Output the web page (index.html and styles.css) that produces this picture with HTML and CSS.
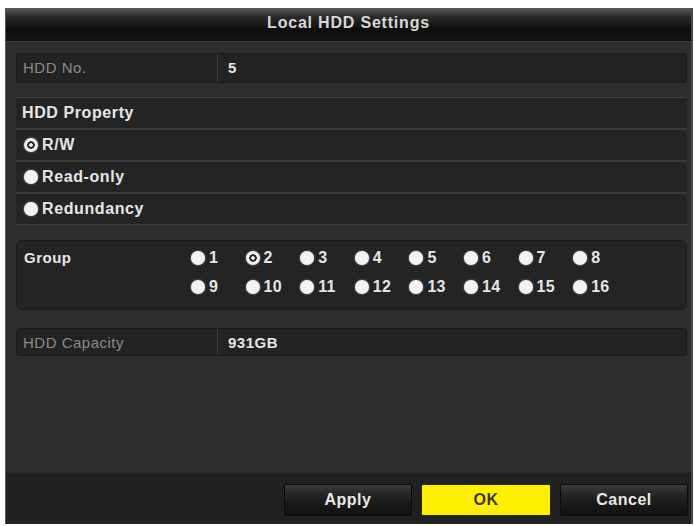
FILE: index.html
```html
<!DOCTYPE html>
<html lang="en">
<head>
    <meta charset="UTF-8">
    <meta name="viewport" content="width=device-width, initial-scale=1.0">
    <title>Local HDD Settings</title>
    <link rel="stylesheet" href="styles.css">
</head>
<body>
    <div class="window">
        <div class="title">Local HDD Settings</div>

        <div class="content">
            <div class="field">
                <div class="label dim">HDD No.</div>
                <div class="value">5</div>
            </div>

            <div class="list">
                <div class="item">HDD Property</div>
                <div class="item"><span class="radio checked"></span>R/W</div>
                <div class="item"><span class="radio"></span>Read-only</div>
                <div class="item"><span class="radio"></span>Redundancy</div>
            </div>

            <div class="group">
                <div class="group-label">Group</div>
                <div class="group-grid">
                    <div class="opt"><span class="radio"></span>1</div>
                    <div class="opt"><span class="radio checked"></span>2</div>
                    <div class="opt"><span class="radio"></span>3</div>
                    <div class="opt"><span class="radio"></span>4</div>
                    <div class="opt"><span class="radio"></span>5</div>
                    <div class="opt"><span class="radio"></span>6</div>
                    <div class="opt"><span class="radio"></span>7</div>
                    <div class="opt"><span class="radio"></span>8</div>
                    <div class="opt"><span class="radio"></span>9</div>
                    <div class="opt"><span class="radio"></span>10</div>
                    <div class="opt"><span class="radio"></span>11</div>
                    <div class="opt"><span class="radio"></span>12</div>
                    <div class="opt"><span class="radio"></span>13</div>
                    <div class="opt"><span class="radio"></span>14</div>
                    <div class="opt"><span class="radio"></span>15</div>
                    <div class="opt"><span class="radio"></span>16</div>
                </div>
            </div>

            <div class="field capacity">
                <div class="label dim">HDD Capacity</div>
                <div class="value">931GB</div>
            </div>
        </div>

        <div class="footer">
            <button class="btn">Apply</button>
            <button class="btn ok">OK</button>
            <button class="btn">Cancel</button>
        </div>
    </div>
</body>
</html>
```

FILE: styles.css
```css
* {
    margin: 0;
    padding: 0;
    box-sizing: border-box;
}

body {
    background: #fff;
    font-family: 'Liberation Sans', Arial, sans-serif;
    color: #e6e6e6;
}

.window {
    margin: 8px 0 0 5px;
    width: 688px;
    height: 516px;
    display: flex;
    flex-direction: column;
    background: #2e2e2e;
    border-left: 1px solid #5a5a5a;
    border-right: 2px solid #4a4a4a;
}

.title {
    height: 34px;
    line-height: 30px;
    text-align: center;
    font-size: 16px;
    font-weight: bold;
    letter-spacing: 0.8px;
    color: #d8d8d8;
    background: linear-gradient(#5c5c5c 0, #2c2c2c 25%, #0c0c0c 65%, #141414 100%);
    border-bottom: 1px solid #3a3a3a;
}

.content {
    flex: 1;
    padding: 11px 4px 0 10px;
    display: flex;
    flex-direction: column;
}

.field {
    display: flex;
    height: 30px;
    background: #232323;
    border: 1px solid #1c1c1c;
    border-radius: 3px;
    font-size: 15px;
}

.capacity {
    margin-top: 18px;
    height: 28px;
}

.label {
    width: 201px;
    padding-left: 6px;
    line-height: 27px;
    border-right: 1px solid #3c3c3c;
    letter-spacing: 0.5px;
}

.dim {
    color: #8a8a8a;
}

.value {
    padding-left: 10px;
    line-height: 27px;
    font-weight: bold;
    letter-spacing: 0.5px;
}

.list {
    margin-top: 14px;
    display: flex;
    flex-direction: column;
    gap: 2px;
    background: #3a3a3a;
    border-top: 1px solid #3c3c3c;
    border-bottom: 1px solid #3c3c3c;
}

.item {
    display: flex;
    align-items: center;
    height: 30px;
    padding-left: 8px;
    background: #242424;
    font-size: 16px;
    font-weight: bold;
    letter-spacing: 0.6px;
}

.item:first-child {
    padding-left: 6px;
}

.radio {
    width: 14px;
    height: 14px;
    border-radius: 50%;
    background: #f2f2f2;
    box-shadow: 0 0 2px rgba(255, 255, 255, 0.6);
    margin-right: 4px;
    flex-shrink: 0;
}

.radio.checked {
    background: radial-gradient(circle, #f2f2f2 0 1.5px, #2a2a2a 2px 3.5px, #f2f2f2 4px);
}

.group {
    margin-top: 15px;
    height: 70px;
    display: flex;
    align-items: flex-start;
    background: #242424;
    border: 1px solid #1c1c1c;
    border-radius: 6px;
    padding: 8px 0 0 7px;
}

.group-label {
    width: 167px;
    font-size: 15px;
    font-weight: bold;
    line-height: 18px;
    letter-spacing: 0.5px;
}

.group-grid {
    display: grid;
    grid-template-columns: repeat(8, 54.6px);
    align-content: start;
    row-gap: 11px;
}

.opt {
    display: flex;
    align-items: center;
    height: 18px;
    font-size: 16px;
    font-weight: bold;
    letter-spacing: 0.3px;
}

.footer {
    height: 52px;
    background: #212121;
    border-top: 1px solid #2a2a2a;
    display: flex;
    justify-content: flex-end;
    align-items: flex-start;
    gap: 9px;
    padding: 11px 3px 0 0;
}

.btn {
    width: 128px;
    height: 32px;
    border: 1px solid #0c0c0c;
    border-radius: 2px;
    background: linear-gradient(#3a3a3a 0, #1e1e1e 45%, #121212 100%);
    color: #e8e8e8;
    font-family: 'Liberation Sans', Arial, sans-serif;
    font-size: 16px;
    font-weight: bold;
    letter-spacing: 0.5px;
    cursor: pointer;
}

.btn.ok {
    width: 130px;
    background: #fff000;
    border-color: #2a2a00;
    color: #3a3a3a;
}
```
